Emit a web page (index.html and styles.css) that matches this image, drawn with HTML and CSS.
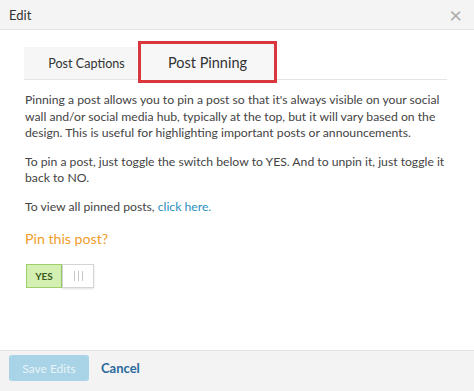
FILE: index.html
```html
<!DOCTYPE html>
<html lang="en">
<head>
<meta charset="UTF-8">
<title>Edit</title>
<link rel="stylesheet" href="styles.css">
</head>
<body>
<div class="modal">
  <div class="modal-header">
    <span class="modal-title">Edit</span>
    <span class="modal-close">&times;</span>
  </div>
  <div class="modal-body">
    <div class="tabs">
      <div class="tab">Post Captions</div>
      <div class="tab active">Post Pinning</div>
    </div>
    <p>Pinning a post allows you to pin a post so that it's always visible on your social wall and/or social media hub, typically at the top, but it will vary based on the design. This is useful for highlighting important posts or announcements.</p>
    <p>To pin a post, just toggle the switch below to YES. And to unpin it, just toggle it back to NO.</p>
    <p>To view all pinned posts, <a href="#">click here.</a></p>
    <h3 class="pin-title">Pin this post?</h3>
    <div class="toggle">
      <span class="toggle-on">YES</span>
      <span class="toggle-knob"><i></i><i></i><i></i></span>
    </div>
  </div>
  <div class="modal-footer">
    <button class="btn-save">Save Edits</button>
    <a href="#" class="btn-cancel">Cancel</a>
  </div>
</div>
</body>
</html>
```

FILE: styles.css
```css
body {
  margin: 0;
  font-family: Lato, "Open Sans", sans-serif;
  color: #444;
  background: #fff;
}
.modal {
  width: 474px;
  height: 391px;
  display: flex;
  flex-direction: column;
  overflow: hidden;
}
.modal-header {
  height: 30px;
  background: #f4f4f4;
  border-bottom: 1px solid #e2e2e2;
  display: flex;
  align-items: center;
  justify-content: space-between;
  padding: 0 12px 0 9px;
  box-sizing: border-box;
}
.modal-title {
  font-size: 13px;
  color: #333;
}
.modal-close {
  font-size: 22px;
  color: #aaa;
  line-height: 1;
}
.modal-body {
  flex: 1;
  padding: 11px 27px 0 24px;
}
.tabs {
  display: flex;
  align-items: flex-end;
  height: 38px;
  border-bottom: 1px solid #e4e4e4;
  margin-bottom: 12px;
}
.tab {
  width: 113px;
  height: 32px;
  background: #f6f6f6;
  display: flex;
  align-items: center;
  justify-content: center;
  padding-left: 12px;
  box-sizing: border-box;
  font-size: 12.6px;
  color: #333;
  margin-right: 1px;
}
.tab.active {
  width: 139px;
  height: 42px;
  padding-left: 0;
  font-size: 14.5px;
  border: 3px solid #d9363e;
  background: #f7f7f7;
  margin-bottom: -4px;
}
.modal-body p {
  font-size: 12.2px;
  line-height: 16.5px;
  margin: 0 0 12px 1px;
}
.modal-body a {
  color: #2b8fc1;
  text-decoration: none;
}
.pin-title {
  font-size: 14.2px;
  font-weight: normal;
  color: #ef9d2b;
  margin: 14px 0 0 1px;
  line-height: 20px;
}
.toggle {
  display: flex;
  width: 68px;
  height: 24px;
  margin: 15px 0 0 2px;
}
.toggle-on {
  width: 36px;
  background: #d3efb2;
  border: 1px solid #9fce6a;
  box-sizing: border-box;
  font-size: 10px;
  font-weight: bold;
  color: #3a5a1e;
  display: flex;
  align-items: center;
  justify-content: center;
}
.toggle-knob {
  width: 32px;
  background: #fff;
  border: 1px solid #d4d4d4;
  box-shadow: 0 1px 2px rgba(0, 0, 0, 0.12);
  box-sizing: border-box;
  display: flex;
  align-items: center;
  justify-content: center;
  gap: 3px;
}
.toggle-knob i {
  width: 1px;
  height: 10px;
  background: #c8c8c8;
}
.modal-footer {
  height: 40px;
  background: #f3f3f3;
  border-top: 1px solid #e2e2e2;
  display: flex;
  align-items: center;
  padding: 0 9px;
}
.btn-save {
  width: 80px;
  height: 26px;
  border: none;
  border-radius: 3px;
  background: #a9d3e6;
  color: #e8f4f9;
  font-family: Lato, sans-serif;
  font-size: 12px;
  margin-top: -6px;
}
.btn-cancel {
  margin-left: 12px;
  margin-top: -6px;
  font-size: 13px;
  font-weight: bold;
  color: #2a6a9e;
  text-decoration: none;
}
```
